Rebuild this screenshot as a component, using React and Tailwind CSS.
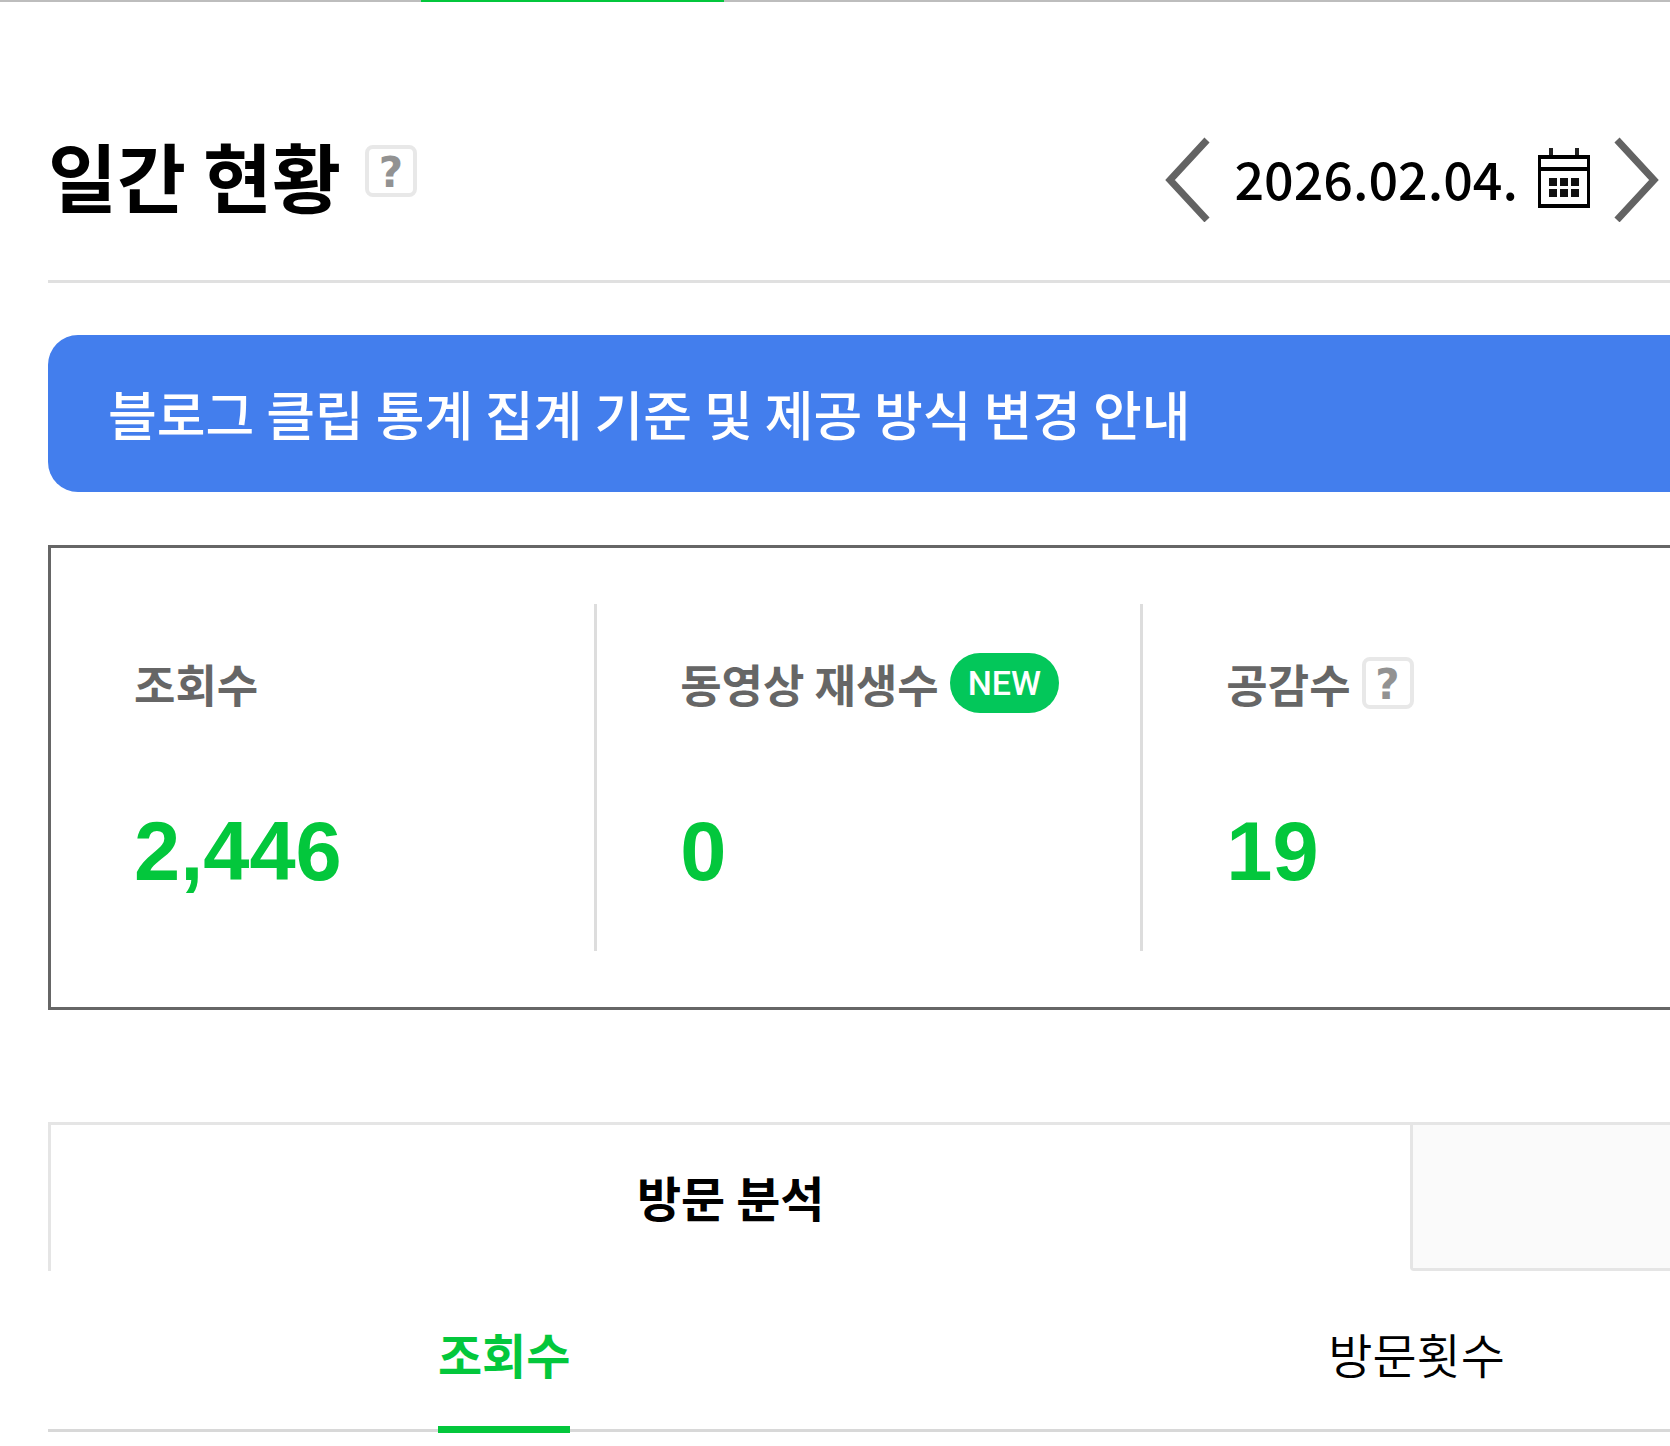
import { useState } from "react";

const metrics = [
  { label: "조회수", value: "2,446" },
  { label: "동영상 재생수", value: "0", isNew: true },
  { label: "공감수", value: "19", help: true },
];

const subTabs = ["조회수", "방문횟수"];

function HelpButton() {
  return (
    <button
      type="button"
      className="flex h-[52px] w-[52px] items-center justify-center rounded-lg border-4 border-[#e8e8e8] bg-white pt-1 font-['DejaVu_Sans',sans-serif] text-[42px] leading-none font-bold text-[#929292]"
    >
      ?
    </button>
  );
}

function Arrow({ points }) {
  return (
    <svg width="46" height="88" viewBox="0 0 46 88" fill="none">
      <polyline points={points} stroke="#636363" strokeWidth="7" />
    </svg>
  );
}

function CalendarIcon() {
  return (
    <svg width="52" height="60" viewBox="0 0 52 60" fill="none">
      <path d="M13 0v8M39 0v8" stroke="#222" strokeWidth="4" />
      <path d="M0 7h52v53H0zM3 11v8h46v-8zM3 23v33h46V23z" fill="#000" fillRule="evenodd" />
      <path
        d="M11 30h8v8h-8zM22 30h8v8h-8zM33 30h8v8h-8zM11 41h8v8h-8zM22 41h8v8h-8zM33 41h8v8h-8z"
        fill="#111"
      />
    </svg>
  );
}

function App() {
  const [activeTab, setActiveTab] = useState("조회수");

  return (
    <div className="min-h-screen overflow-hidden bg-white font-['Noto_Sans_CJK_KR',sans-serif] text-black">
      {/* bottom edge of the main menu */}
      <div className="h-[2px] bg-[#bdbdbd] pl-[421px]">
        <div className="h-full w-[303px] bg-[#03c73c]" />
      </div>

      <main className="pl-12">
        <header className="flex h-[281px] items-center justify-between border-b-[3px] border-[#e0e0e0] pt-[74px] pr-[10px]">
          <div className="flex items-start gap-6 pb-2">
            <h1 className="text-[75px] leading-none font-bold">일간 현황</h1>
            <div className="pt-2">
              <HelpButton />
            </div>
          </div>

          <div className="flex items-center gap-6">
            <button type="button" aria-label="이전">
              <Arrow points="43,6 6,46 43,86" />
            </button>
            <button type="button" className="flex items-center gap-5">
              <span className="text-[52px] leading-none font-medium">2026.02.04.</span>
              <CalendarIcon />
            </button>
            <button type="button" aria-label="다음">
              <Arrow points="3,6 40,46 3,86" />
            </button>
          </div>
        </header>

        <a
          href="#notice"
          className="mt-[52px] flex h-[157px] items-center rounded-l-[30px] bg-[#437eed] pl-[60px] text-[53px] leading-none font-medium whitespace-nowrap text-white"
        >
          블로그 클립 통계 집계 기준 및 제공 방식 변경 안내
        </a>

        <section className="mt-[53px] grid grid-cols-[28fr_28fr_27fr] border-3 border-r-0 border-[#666] py-14">
          {metrics.map((item) => (
            <div
              key={item.label}
              className="h-[347px] border-r-3 border-[#ddd] pt-12 pl-[83px] last:border-r-0"
            >
              <div className="flex h-[62px] items-center gap-[11px] whitespace-nowrap">
                <h2 className="text-[45px] leading-none font-bold text-[#666]">
                  {item.label}
                </h2>
                {item.isNew && (
                  <span className="flex h-[60px] w-[109px] items-center justify-center rounded-full bg-[#03c75a] font-['Roboto',sans-serif] text-[34px] leading-none font-medium text-white">
                    NEW
                  </span>
                )}
                {item.help && <HelpButton />}
              </div>
              <p className="mt-24 font-['Liberation_Sans',sans-serif] text-[83px] leading-none font-bold text-[#03c73c]">
                {item.value}
              </p>
            </div>
          ))}
        </section>

        <section className="mt-28">
          <div className="grid h-[149px] grid-cols-[21fr_4fr]">
            <button
              type="button"
              className="border-t-3 border-l-3 border-[#e5e5e5] pb-1 text-[48px] leading-none font-bold"
            >
              방문 분석
            </button>
            <div className="rounded-bl-sm border-3 border-r-0 border-[#e5e5e5] bg-[#fafafa]" />
          </div>

          <div className="flex h-[161px] border-b-3 border-[#d8d8d8]">
            {subTabs.map((tab) => (
              <div key={tab} className="flex shrink-0 basis-9/16 justify-center">
                <button
                  type="button"
                  onClick={() => setActiveTab(tab)}
                  className={`-mb-[4px] border-b-[7px] pt-2 text-[48px] leading-none ${
                    activeTab === tab
                      ? "border-[#03c73c] font-bold text-[#03c73c]"
                      : "border-transparent font-[350]"
                  }`}
                >
                  {tab}
                </button>
              </div>
            ))}
          </div>
        </section>
      </main>
    </div>
  );
}

export default App;
